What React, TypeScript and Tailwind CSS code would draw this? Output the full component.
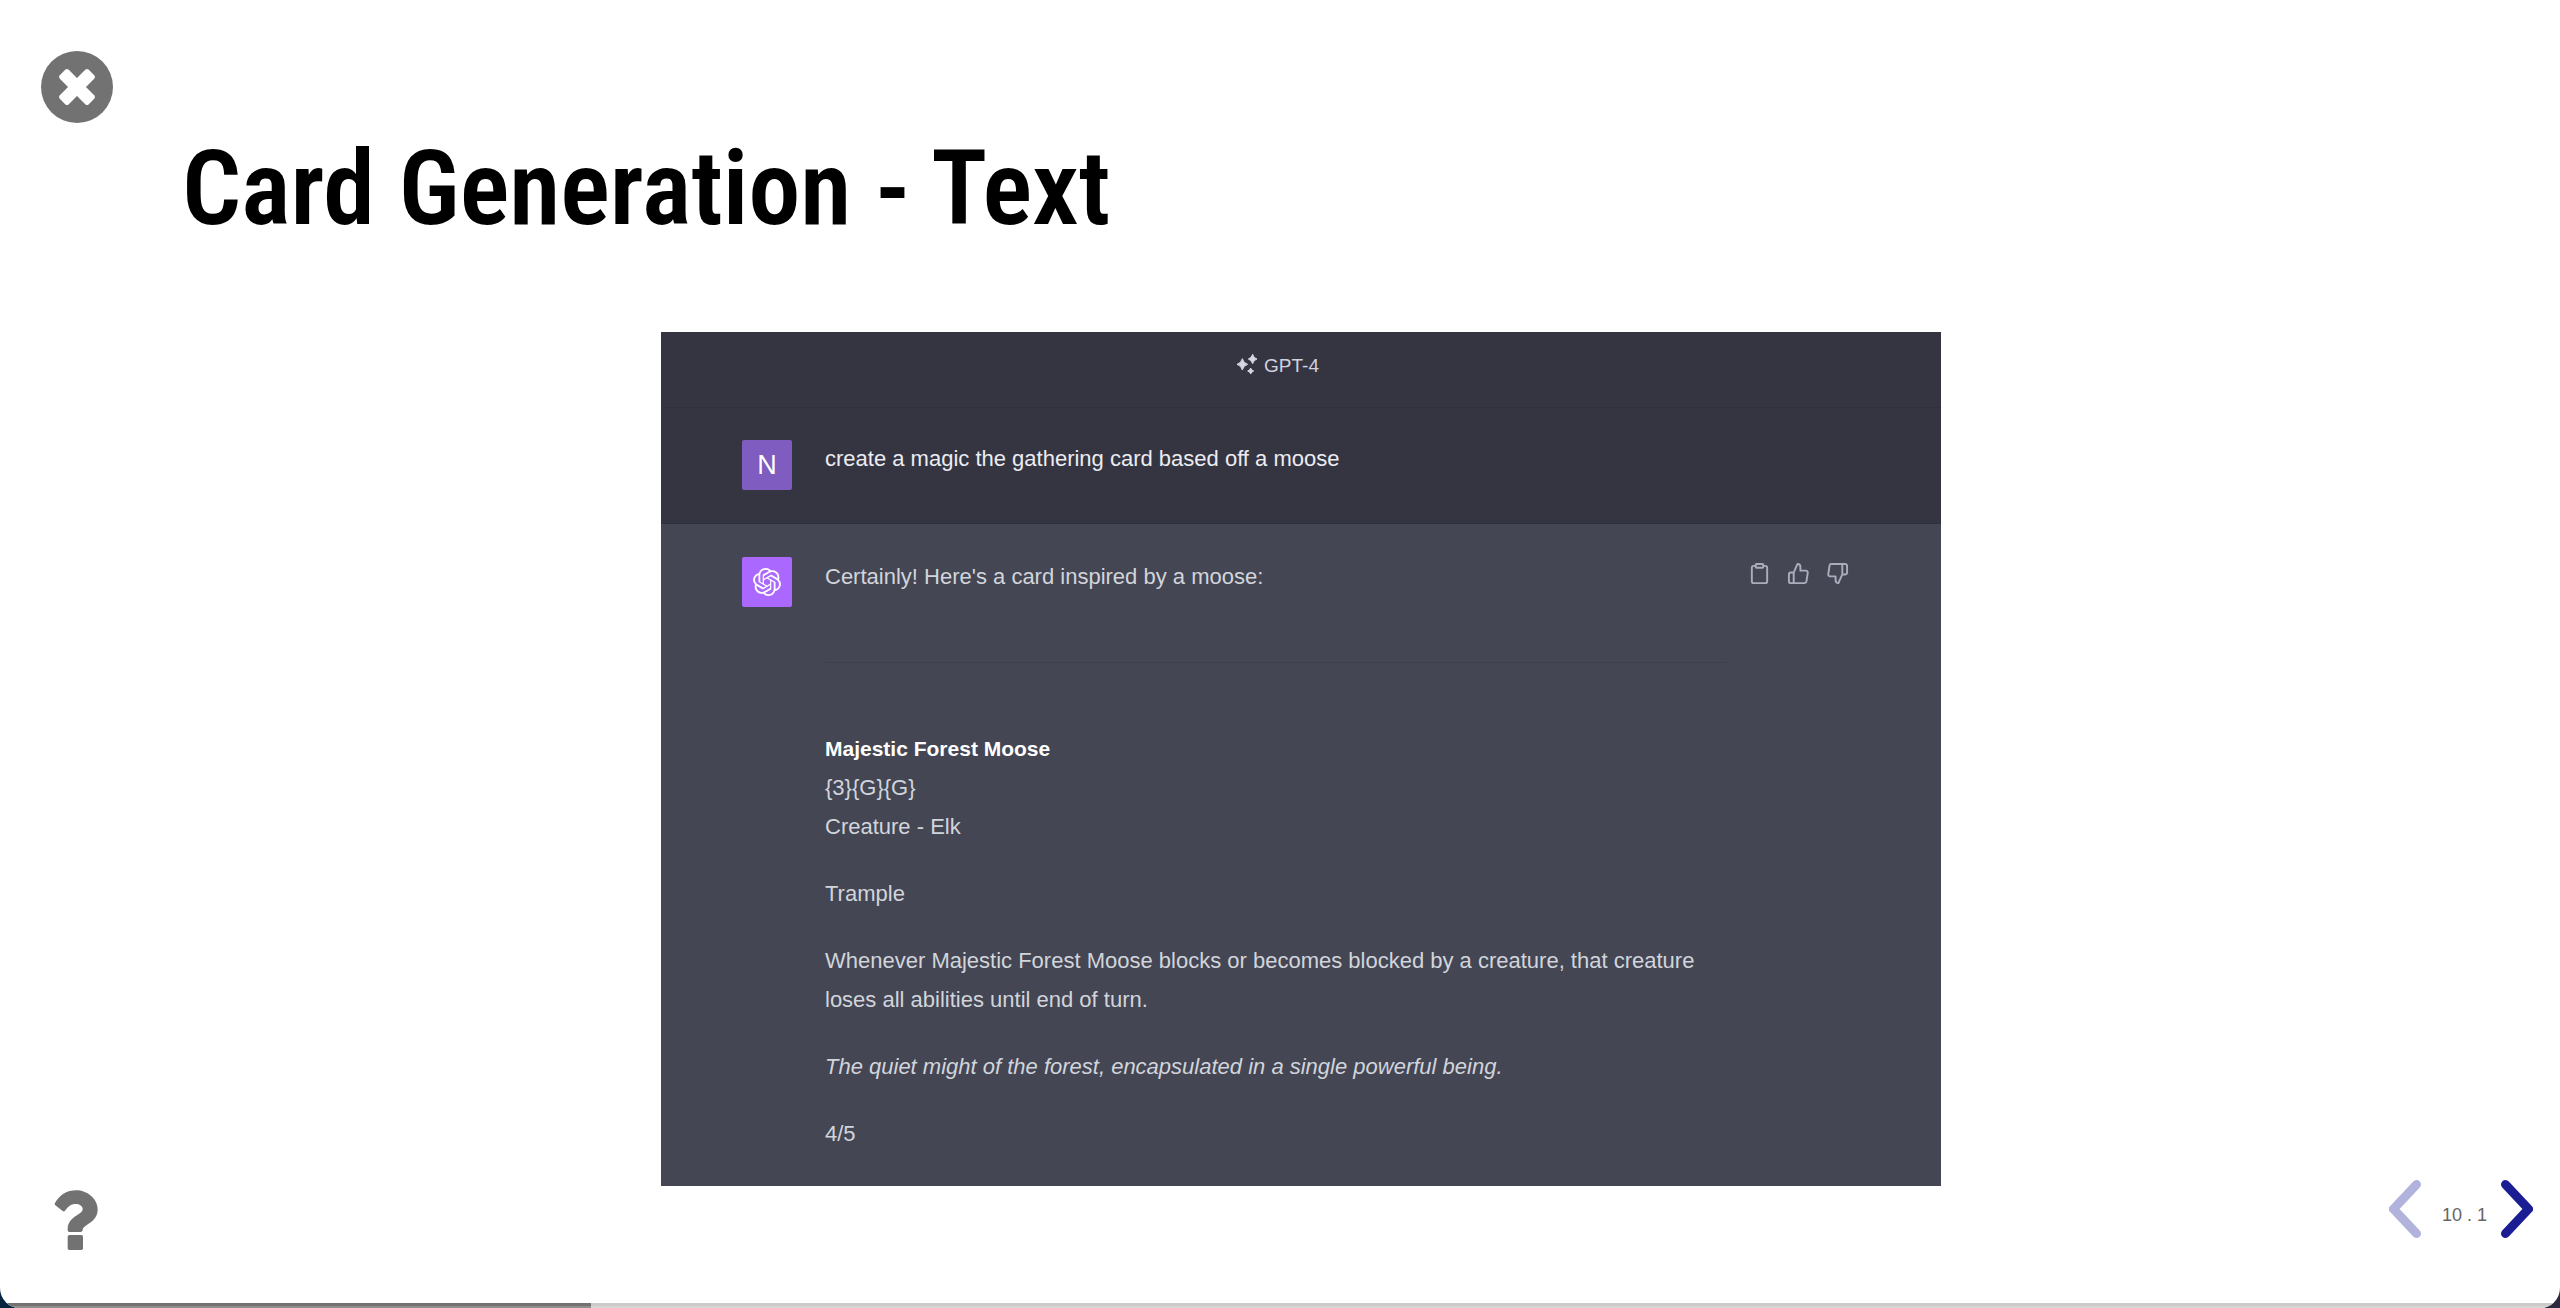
import type { ReactNode } from "react";
import { FiClipboard, FiThumbsDown, FiThumbsUp } from "react-icons/fi";
import { SiOpenai } from "react-icons/si";

const SLIDE_PROGRESS = 23.1;

function CloseIcon() {
  return (
    <svg viewBox="-37 -37 74 74" className="size-[74px]" aria-hidden="true">
      <circle r="36" fill="currentColor" />
      <g fill="white" transform="rotate(45)">
        <rect x="-20.5" y="-6.3" width="41" height="12.6" rx="2.5" />
        <rect x="-6.3" y="-20.5" width="12.6" height="41" rx="2.5" />
      </g>
    </svg>
  );
}

function HelpIcon() {
  return (
    <svg viewBox="162 90 132 180" className="h-[60px] w-11" fill="currentColor" aria-hidden="true">
      <path d="M208 216Q203 216 203 211V206C203 183 222 171 233 164C243 158 248 154 248 147C248 138 238 132 227 132C212 132 205 139 195 152Q192 156 188 153L166 136Q162 133 165 129C180 104 200 91 229 91C260 91 293 115 293 148C293 190 249 192 248 211Q246 216 242 216Z" />
      <rect x="203" y="225" width="46" height="45" rx="5" />
    </svg>
  );
}

function Sparkles() {
  return (
    <svg
      viewBox="0 0 60 60"
      className="size-5 overflow-visible fill-[#d6d6e4] stroke-[#d6d6e4] stroke-3"
      strokeLinejoin="round"
      aria-hidden="true"
    >
      <path d="M16 14Q19 27 32 31Q19 35 16 48Q13 35 0 31Q13 27 16 14Z" />
      <path d="M47 1Q49 12 60 15Q49 18 47 29Q44 18 34 15Q44 12 47 1Z" />
      <path d="M41 42Q43 49 50 51Q43 53 41 60Q39 53 32 51Q39 49 41 42Z" />
    </svg>
  );
}

function Message({ avatar, children }: { avatar: ReactNode; children: ReactNode }) {
  return (
    <div className="flex gap-[33px] pr-[92px] pl-[81px]">
      {avatar}
      {children}
    </div>
  );
}

function Conversation() {
  return (
    <section
      aria-label="GPT-4 conversation"
      className="w-[1280px] max-w-full bg-[#343541] text-[22px] leading-[39px] text-[#d1d5db]"
    >
      <header className="flex h-[76px] items-start justify-center gap-[7px] border-b border-[#2f303b] pt-[22px] pr-[46px] text-[19px] leading-6 text-[#d1d1e0]">
        <Sparkles />
        <span>GPT-4</span>
      </header>

      <div className="border-b border-[#2f303b] pt-8 pb-[33px] text-[#ececf1]">
        <Message
          avatar={
            <div className="flex size-[50px] shrink-0 items-center justify-center rounded-xs bg-[#7f5cbf] text-[27px] text-white">
              N
            </div>
          }
        >
          <p className="-mt-px">create a magic the gathering card based off a moose</p>
        </Message>
      </div>

      <div className="bg-[#444654] py-[33px]">
        <Message
          avatar={
            <div className="flex size-[50px] shrink-0 items-center justify-center rounded-xs bg-[#ab68ff] text-white">
              <SiOpenai className="size-7" aria-label="ChatGPT" />
            </div>
          }
        >
          <div className="flex-1">
            <p>Certainly! Here's a card inspired by a moose:</p>
            <hr className="my-[66px] border-[#3f404d]" />
            <div className="flex flex-col gap-7">
              <p>
                <strong className="text-[21px] text-white">Majestic Forest Moose</strong>
                <br />
                {"{3}{G}{G}"}
                <br />
                Creature - Elk
              </p>
              <p>Trample</p>
              <p>
                Whenever Majestic Forest Moose blocks or becomes blocked by a creature, that creature loses all abilities
                until end of turn.
              </p>
              <p>
                <em>The quiet might of the forest, encapsulated in a single powerful being.</em>
              </p>
              <p>4/5</p>
            </div>
          </div>
          <div className="-ml-3 flex items-start gap-4 pt-[5px] text-[#acacbe]">
            <button type="button" aria-label="Copy">
              <FiClipboard className="size-[23px]" />
            </button>
            <button type="button" aria-label="Good response">
              <FiThumbsUp className="size-[23px]" />
            </button>
            <button type="button" aria-label="Bad response">
              <FiThumbsDown className="size-[23px]" />
            </button>
          </div>
        </Message>
      </div>
    </section>
  );
}

function Chevron({ path }: { path: string }) {
  return (
    <svg
      viewBox="0 0 32 58"
      className="h-[58px] w-8 fill-none stroke-current stroke-9"
      strokeLinecap="round"
      strokeLinejoin="round"
      aria-hidden="true"
    >
      <path d={path} />
    </svg>
  );
}

function SlideControls() {
  return (
    <nav aria-label="Slides" className="flex shrink-0 items-center">
      <button type="button" aria-label="Previous slide" className="text-[#b2b3dd]">
        <Chevron path="M27.5 4.5 4.5 29l23 24.5" />
      </button>
      <span className="w-20 pt-3 pl-[21px] text-lg leading-6 whitespace-nowrap text-[#666666]">10 . 1</span>
      <button type="button" aria-label="Next slide" className="text-[#1b1e93]">
        <Chevron path="M4.5 4.5 27.5 29l-23 24.5" />
      </button>
    </nav>
  );
}

export default function App() {
  return (
    <div className="min-h-screen bg-linear-to-r from-[#062440] to-[#29283f] font-['Liberation_Sans',Arial,sans-serif]">
      <div className="flex min-h-screen flex-col overflow-hidden rounded-b-[20px] bg-white">
        <div className="flex flex-1">
          <aside className="flex w-[182px] shrink-0 flex-col items-start justify-between pt-[50px] pb-[53px] pl-10 text-[#727272]">
            <button type="button" aria-label="Close">
              <CloseIcon />
            </button>
            <button type="button" aria-label="Help" className="ml-[14px]">
              <HelpIcon />
            </button>
          </aside>

          <main className="flex min-w-0 flex-1 flex-col pt-[126px]">
            <h1 className="font-['Roboto_Condensed','Roboto',sans-serif] text-[104px] leading-[126px] font-semibold text-black">
              Card Generation - Text
            </h1>
            <div className="flex justify-center pt-20">
              <Conversation />
            </div>
          </main>

          <aside className="flex w-[140px] shrink-0 items-end justify-end pr-[27px] pb-[65px]">
            <SlideControls />
          </aside>
        </div>

        <div
          role="progressbar"
          aria-label="Presentation progress"
          aria-valuenow={SLIDE_PROGRESS}
          aria-valuemin={0}
          aria-valuemax={100}
          className="h-[5px] bg-[#cbcbcb] shadow-[inset_0_-2px_0_#d6d6d6]"
        >
          <div
            className="h-full bg-[#727272] shadow-[inset_0_-2px_0_#8e8e8e]"
            style={{ width: `${SLIDE_PROGRESS}%` }}
          />
        </div>
      </div>
    </div>
  );
}
